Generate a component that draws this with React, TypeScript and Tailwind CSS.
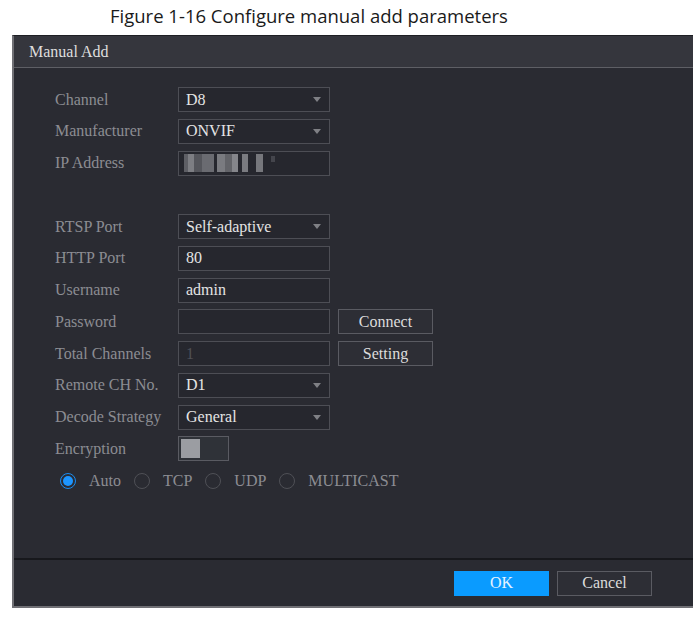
import React from 'react';

const serif = "font-['Liberation_Serif','DejaVu_Serif',serif]";

function Select({ value }: { value: string }) {
  return (
    <div className="flex h-[25px] w-[152px] items-center justify-between border border-[#4d4e55] bg-[#26272e] pl-[7px] pr-[8px]">
      <span className="text-[16px] text-[#e4e4e4]">{value}</span>
      <svg width="8" height="5" viewBox="0 0 8 5">
        <path d="M0 0 L8 0 L4 5 Z" fill="#7f8085" />
      </svg>
    </div>
  );
}

function Input({ value, dim }: { value?: string; dim?: boolean }) {
  return (
    <div className="flex h-[25px] w-[152px] items-center border border-[#4d4e55] bg-[#26272e] pl-[7px]">
      <span className={dim ? 'text-[16px] text-[#505157]' : 'text-[16px] text-[#e4e4e4]'}>{value}</span>
    </div>
  );
}

function Masked() {
  return (
    <div className="flex h-[25px] w-[152px] items-center border border-[#4d4e55] bg-[#26272e] pl-[5px]">
      <div className="flex h-[18px] items-stretch">
        <div className="w-[4px] bg-[#5e5f65]" />
        <div className="w-[6px] bg-[#7d7e83]" />
        <div className="w-[8px] bg-[#55565c]" />
        <div className="w-[12px] bg-[#6a6b71]" />
        <div className="w-[3px]" />
        <div className="w-[8px] bg-[#7a7b80]" />
        <div className="w-[7px] bg-[#636469]" />
        <div className="w-[6px] bg-[#85868b]" />
        <div className="w-[4px]" />
        <div className="w-[6px] bg-[#7a7b80]" />
        <div className="w-[8px]" />
        <div className="w-[7px] bg-[#76777c]" />
        <div className="w-[8px]" />
        <div className="mt-[2px] h-[6px] w-[4px] bg-[#44454c]" />
      </div>
    </div>
  );
}

function Btn({ label }: { label: string }) {
  return (
    <div className="flex h-[25px] w-[95px] items-center justify-center border border-[#5a5b62] bg-[#2d2e35] text-[16px] text-[#dcdcdc]">
      {label}
    </div>
  );
}

function Row({ label, children }: { label: string; children?: React.ReactNode }) {
  return (
    <div className="flex h-[25px] items-center">
      <div className="w-[123px] text-[16px] text-[#8c8d92]">{label}</div>
      <div className="flex items-center gap-[8px]">{children}</div>
    </div>
  );
}

function Radio({ label, on }: { label: string; on?: boolean }) {
  return (
    <div className="flex items-center gap-[13px]">
      {on ? (
        <div className="flex h-[16px] w-[16px] items-center justify-center rounded-full border-[1.5px] border-[#1a8cf0]">
          <div className="h-[10px] w-[10px] rounded-full bg-[#1e96ff]" />
        </div>
      ) : (
        <div className="h-[16px] w-[16px] rounded-full border-[1.5px] border-[#4f5056]" />
      )}
      <span className="text-[16px] text-[#8c8d92]">{label}</span>
    </div>
  );
}

export default function App() {
  return (
    <div className="h-[618px] w-[700px] bg-white">
      <div className="h-[35px] pl-[110px] pt-[3px] font-['Open_Sans',sans-serif] text-[18.5px] leading-[26px] text-[#1a1a1a]">
        Figure 1-16 Configure manual add parameters
      </div>
      <div className={`ml-[12px] flex h-[573px] w-[681px] flex-col border-b-2 border-l-2 border-t border-b-[#707075] border-l-[#707075] border-t-[#1e1f24] bg-[#2a2b32] ${serif}`}>
        <div className="flex h-[32px] items-center border-b border-[#5e5f65] bg-[#35363d] pl-[15px] text-[16px] text-[#dedede]">
          Manual Add
        </div>
        <div className="flex flex-1 flex-col gap-[6.75px] pl-[41px] pt-[19px]">
          <Row label="Channel"><Select value="D8" /></Row>
          <Row label="Manufacturer"><Select value="ONVIF" /></Row>
          <Row label="IP Address"><Masked /></Row>
          <Row label="" />
          <Row label="RTSP Port"><Select value="Self-adaptive" /></Row>
          <Row label="HTTP Port"><Input value="80" /></Row>
          <Row label="Username"><Input value="admin" /></Row>
          <Row label="Password"><Input /><Btn label="Connect" /></Row>
          <Row label="Total Channels"><Input value="1" dim /><Btn label="Setting" /></Row>
          <Row label="Remote CH No."><Select value="D1" /></Row>
          <Row label="Decode Strategy"><Select value="General" /></Row>
          <Row label="Encryption">
            <div className="flex h-[25px] w-[51px] items-center border border-[#5a5b62] bg-[#2f3238] pl-[2px]">
              <div className="h-[19px] w-[19px] bg-[#9b9da2]" />
            </div>
          </Row>
          <div className="flex h-[25px] items-center gap-[13px] pl-[5px]">
            <Radio label="Auto" on />
            <Radio label="TCP" />
            <Radio label="UDP" />
            <Radio label="MULTICAST" />
          </div>
        </div>
        <div className="flex h-[48px] items-center justify-end gap-[8px] border-t-2 border-[#17181c] pr-[41px]">
          <div className="flex h-[25px] w-[95px] items-center justify-center bg-[#0a9bff] text-[16px] text-[#e6f3ff]">OK</div>
          <Btn label="Cancel" />
        </div>
      </div>
    </div>
  );
}
